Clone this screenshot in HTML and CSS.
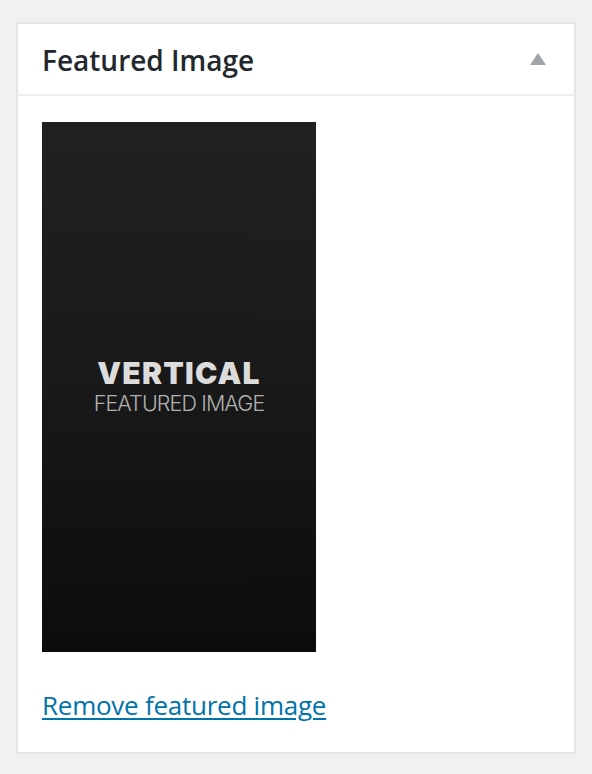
FILE: index.html
```html
<!DOCTYPE html>
<html>
<head>
<meta charset="utf-8">
<link rel="stylesheet" href="styles.css">
</head>
<body>
<div class="postbox">
  <div class="postbox-header">
    <h2 class="hndle">Featured Image</h2>
    <span class="toggle" aria-hidden="true"></span>
  </div>
  <div class="inside">
    <div class="thumb">
      <div class="thumb-title">VERTICAL</div>
      <div class="thumb-sub">FEATURED IMAGE</div>
    </div>
    <p class="remove"><a href="#">Remove featured image</a></p>
  </div>
</div>
</body>
</html>
```

FILE: styles.css
```css
html, body {
  margin: 0;
  padding: 0;
  background: #f1f1f1;
}
body {
  padding: 22px 16px 0 16px;
  font-family: "Open Sans", "Liberation Sans", sans-serif;
}
.postbox {
  width: 556px;
  height: 728px;
  background: #fff;
  border: 2px solid #e5e5e5;
  box-shadow: 0 2px 2px rgba(0,0,0,0.04);
  display: flex;
  flex-direction: column;
}
.postbox-header {
  height: 70px;
  border-bottom: 2px solid #eeeeee;
  display: flex;
  align-items: center;
  justify-content: space-between;
  padding: 0 28px 0 24px;
}
.hndle {
  margin: 0;
  font-size: 28px;
  font-weight: 600;
  color: #23282d;
  line-height: 39px;
  padding-top: 2px;
}
.toggle {
  width: 0;
  height: 0;
  border-left: 8px solid transparent;
  border-right: 8px solid transparent;
  border-bottom: 12px solid #a0a5aa;
}
.inside {
  padding: 26px 24px 0 24px;
}
.thumb {
  width: 274px;
  height: 530px;
  background: linear-gradient(to bottom, #212121 0%, #1a1a1a 45%, #0c0c0c 100%);
  display: flex;
  flex-direction: column;
  align-items: center;
  justify-content: center;
  box-sizing: border-box;
  padding-bottom: 4px;
}
.thumb-title {
  font-family: "Inter", "DejaVu Sans", sans-serif;
  font-weight: 900;
  font-size: 30px;
  line-height: normal;
  color: #dcdcdc;
  letter-spacing: 1.2px;
}
.thumb-sub {
  font-family: "Inter", "DejaVu Sans", sans-serif;
  font-weight: 300;
  font-size: 21.5px;
  line-height: normal;
  color: #b0b0b0;
  letter-spacing: -0.9px;
  margin-top: -1px;
}
.remove {
  margin: 34px 0 0 0;
  font-size: 26px;
  line-height: 39px;
  letter-spacing: -0.25px;
}
.remove a {
  color: #0073aa;
  text-decoration: underline;
  text-decoration-thickness: 2px;
  text-underline-offset: 3px;
}
```
